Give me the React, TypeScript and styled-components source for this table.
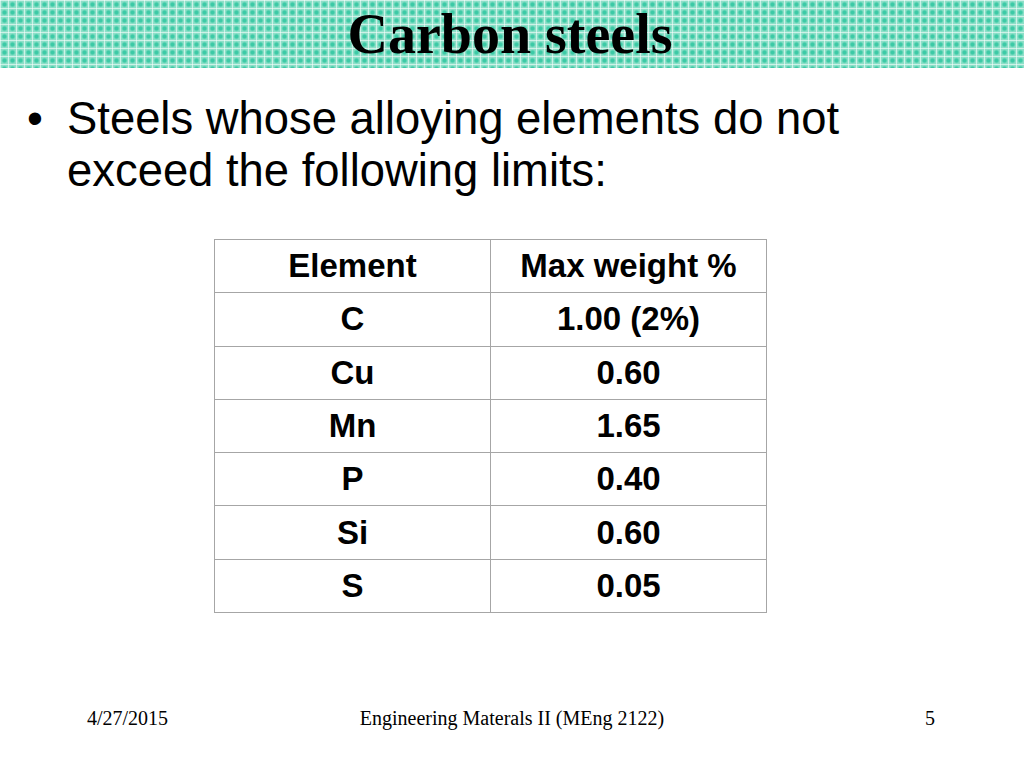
import React from "react";
import styled, { createGlobalStyle } from "styled-components";

const Global = createGlobalStyle`
  html, body { margin: 0; padding: 0; background: #ffffff; }
  * { box-sizing: border-box; }
`;

const Slide = styled.div`
  width: 1024px;
  height: 768px;
  display: flex;
  flex-direction: column;
  background: #ffffff;
  overflow: hidden;
`;

const Header = styled.header`
  height: 68px;
  display: flex;
  align-items: center;
  justify-content: center;
  background-color: #8ee0c9;
  background-image:
    linear-gradient(90deg, rgba(255, 255, 255, 0.55) 1px, transparent 1px),
    linear-gradient(rgba(255, 255, 255, 0.55) 1px, transparent 1px),
    radial-gradient(circle at 4.5px 4.5px, #3ccaa6 1.3px, rgba(60, 202, 166, 0.4) 2.4px, transparent 3.2px);
  background-size: 8px 8px;
`;

const Title = styled.h1`
  margin: 0;
  padding-right: 4px;
  font-family: "Liberation Serif", "Times New Roman", serif;
  font-weight: 700;
  font-size: 56px;
  line-height: 68px;
  color: #000000;
`;

const BulletList = styled.ul`
  list-style: none;
  margin: 25px 0 0 0;
  padding: 0;
`;

const BulletItem = styled.li`
  display: flex;
  font-family: "Liberation Sans", Arial, sans-serif;
  font-size: 45.4px;
  line-height: 52px;
  color: #000000;
`;

const BulletMark = styled.span`
  flex: 0 0 auto;
  width: 40px;
  margin-left: 27px;
`;

const BulletText = styled.span`
  flex: 1 1 auto;
`;

const TableWrap = styled.div`
  display: flex;
  margin-top: 42px;
  padding-left: 214px;
`;

const Table = styled.table`
  width: 553px;
  border-collapse: collapse;
  font-family: "Liberation Sans", Arial, sans-serif;
  font-weight: 700;
  font-size: 33px;
  color: #000000;
`;

const Row = styled.tr`
  height: 53.3px;
`;

const Cell = styled.td`
  width: 50%;
  padding: 0;
  border: 1px solid #a6a6a6;
  text-align: center;
  vertical-align: middle;
  line-height: 38px;
`;

const Footer = styled.footer`
  margin-top: auto;
  margin-bottom: 38px;
  display: grid;
  grid-template-columns: 1fr auto 1fr;
  align-items: center;
  font-family: "Liberation Serif", "Times New Roman", serif;
  font-size: 20px;
  line-height: 24px;
  color: #000000;
`;

const FooterLeft = styled.span`
  justify-self: start;
  padding-left: 87px;
`;

const FooterCenter = styled.span`
  justify-self: center;
`;

const FooterRight = styled.span`
  justify-self: end;
  padding-right: 89px;
`;

const rows: [string, string][] = [
  ["Element", "Max weight %"],
  ["C", "1.00 (2%)"],
  ["Cu", "0.60"],
  ["Mn", "1.65"],
  ["P", "0.40"],
  ["Si", "0.60"],
  ["S", "0.05"],
];

export default function App() {
  return (
    <>
      <Global />
      <Slide>
        <Header>
          <Title>Carbon steels</Title>
        </Header>
        <BulletList>
          <BulletItem>
            <BulletMark>•</BulletMark>
            <BulletText>
              Steels whose alloying elements do not
              <br />
              exceed the following limits:
            </BulletText>
          </BulletItem>
        </BulletList>
        <TableWrap>
          <Table>
            <tbody>
              {rows.map(([a, b]) => (
                <Row key={a}>
                  <Cell>{a}</Cell>
                  <Cell>{b}</Cell>
                </Row>
              ))}
            </tbody>
          </Table>
        </TableWrap>
        <Footer>
          <FooterLeft>4/27/2015</FooterLeft>
          <FooterCenter>Engineering Materals II (MEng 2122)</FooterCenter>
          <FooterRight>5</FooterRight>
        </Footer>
      </Slide>
    </>
  );
}
